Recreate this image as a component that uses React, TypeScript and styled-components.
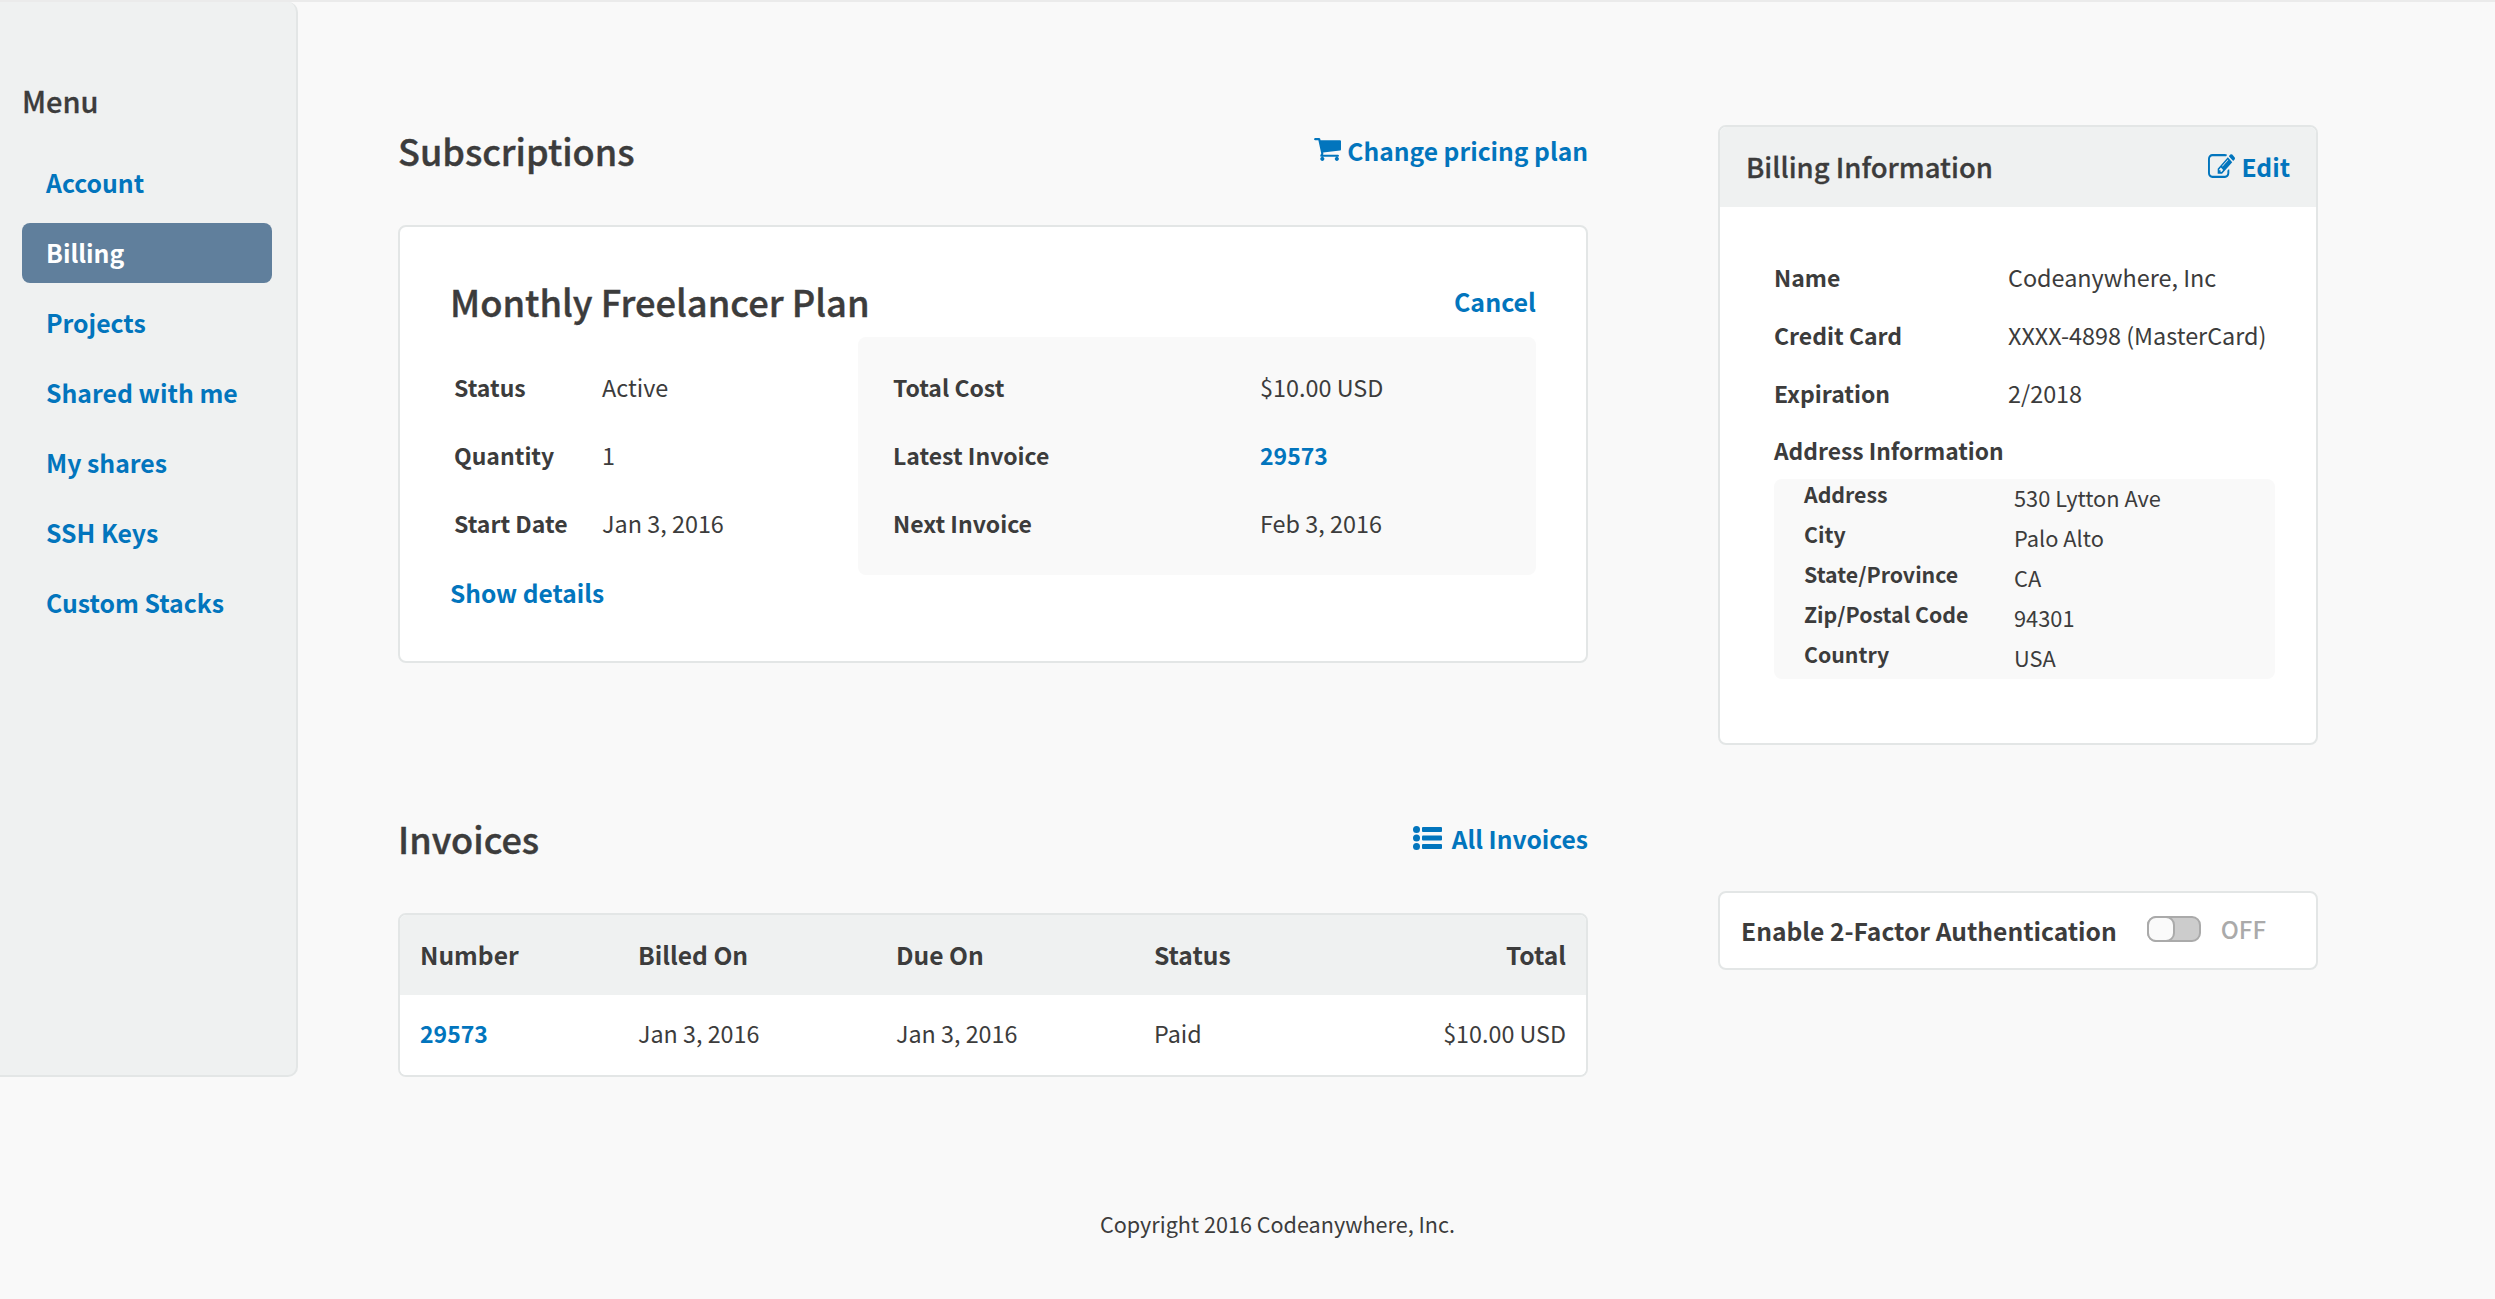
import React from "react";
import styled, { createGlobalStyle } from "styled-components";

const GlobalStyle = createGlobalStyle`
  html, body {
    margin: 0;
    padding: 0;
    background: #f9f9f9;
    overflow: hidden;
  }
  body {
    font-family: "Noto Sans CJK SC", "Noto Sans", sans-serif;
    color: #3c3c3c;
  }
`;

const LINK = "#0275bd";
const LINE = "#e3e6e6";
const SHADE = "#eff1f1";

const Page = styled.div`
  width: 2495px;
  height: 1299px;
  box-sizing: border-box;
  border-top: 2px solid #ebebeb;
`;
const Top = styled.div`
  display: flex;
  height: 1075px;
`;
const Sidebar = styled.aside`
  width: 298px;
  height: 1075px;
  box-sizing: border-box;
  flex: none;
  padding: 0 24px 0 22px;
  background: ${SHADE};
  border-right: 2px solid ${LINE};
  border-bottom: 2px solid ${LINE};
  border-radius: 0 10px 10px 0;
`;
const MenuTitle = styled.h3`
  margin: 78px 0 0;
  font-size: 29px;
  line-height: 40px;
  font-weight: 500;
  -webkit-text-stroke: 0.3px currentColor;
`;
const NavList = styled.nav`
  display: flex;
  flex-direction: column;
  gap: 10px;
  margin-top: 33px;
`;
const NavItem = styled.a<{ $active?: boolean }>`
  display: block;
  height: 60px;
  line-height: 58px;
  padding-left: 24px;
  font-size: 24.8px;
  font-weight: 700;
  border-radius: 8px;
  color: ${(p) => (p.$active ? "#fff" : LINK)};
  background: ${(p) => (p.$active ? "#607f9c" : "transparent")};
`;
const LeftColumn = styled.main`
  width: 1190px;
  margin-left: 100px;
  flex: none;
`;
const RightColumn = styled.section`
  width: 600px;
  margin-left: 130px;
  padding-top: 123px;
  flex: none;
`;
const SectionHead = styled.div<{ $top: number }>`
  display: flex;
  justify-content: space-between;
  align-items: center;
  box-sizing: border-box;
  height: 48px;
  padding-bottom: 3px;
  margin-top: ${(p) => p.$top}px;
  margin-bottom: 50px;
`;
const SectionTitle = styled.h2`
  margin: 0;
  font-size: 36.1px;
  font-weight: 500;
  -webkit-text-stroke: 0.4px currentColor;
`;
const ActionLink = styled.a<{ $gap?: number }>`
  display: flex;
  align-items: center;
  gap: ${(p) => p.$gap ?? 6}px;
  font-size: 24.6px;
  font-weight: 700;
  color: ${LINK};
  svg {
    display: block;
    fill: currentColor;
  }
`;
const Card = styled.div`
  background: #fff;
  border: 2px solid ${LINE};
  border-radius: 8px;
  box-sizing: border-box;
`;
const PlanCard = styled(Card)`
  height: 438px;
  padding: 44px 50px 0 50px;
`;
const PlanHead = styled.div`
  display: flex;
  justify-content: space-between;
  align-items: center;
  height: 60px;
`;
const PlanTitle = styled.h3`
  margin: 0;
  font-size: 36.3px;
  font-weight: 500;
  -webkit-text-stroke: 0.4px currentColor;
`;
const PlanBody = styled.div`
  display: flex;
  height: 238px;
  margin-top: 6px;
`;
const PlanLeft = styled.div`
  width: 408px;
  flex: none;
  padding-top: 17px;
  padding-left: 4px;
  box-sizing: border-box;
`;
const PlanRight = styled.div`
  flex: 1;
  padding: 17px 0 0 35px;
  background: #f9f9f9;
  border-radius: 8px;
`;
const InfoRow = styled.div<{ $label: number; $height?: number }>`
  display: grid;
  grid-template-columns: ${(p) => p.$label}px 1fr;
  align-items: center;
  box-sizing: border-box;
  height: ${(p) => p.$height ?? 68}px;
  padding-bottom: 3px;
  font-size: 23.4px;
  white-space: nowrap;
`;
const Label = styled.span`
  font-size: 23px;
  font-weight: 700;
`;
const ValueLink = styled.a`
  font-size: 23px;
  font-weight: 700;
  color: ${LINK};
`;
const CardLink = styled.a`
  font-size: 25px;
  font-weight: 700;
  color: ${LINK};
`;
const ShowDetails = styled(CardLink)`
  display: block;
  margin-top: -2px;
  line-height: 40px;
  font-size: 24.5px;
`;
const TableCard = styled(Card)`
  height: 164px;
  overflow: hidden;
`;
const TableRow = styled.div<{ $head?: boolean }>`
  display: grid;
  grid-template-columns: 218px 258px 258px 1fr auto;
  align-items: center;
  box-sizing: border-box;
  height: 80px;
  padding: 0 20px ${(p) => (p.$head ? 3 : 5)}px;
  font-size: ${(p) => (p.$head ? 24.6 : 23.3)}px;
  font-weight: ${(p) => (p.$head ? 700 : 400)};
  background: ${(p) => (p.$head ? SHADE : "#fff")};
`;
const BillingCard = styled(Card)`
  height: 620px;
  overflow: hidden;
`;
const BillingHead = styled.div`
  display: flex;
  justify-content: space-between;
  align-items: center;
  box-sizing: border-box;
  height: 80px;
  padding: 0 26px 3px;
  background: ${SHADE};
`;
const BillingTitle = styled.h3`
  margin: 0;
  font-size: 27.5px;
  font-weight: 500;
  -webkit-text-stroke: 0.3px currentColor;
`;
const BillingBody = styled.div`
  padding: 42px 40px 0 54px;
`;
const AddressTitle = styled.div`
  height: 58px;
  line-height: 55px;
  font-size: 22.8px;
  font-weight: 700;
`;
const AddressPanel = styled.div`
  width: 501px;
  height: 200px;
  margin-top: -2px;
  box-sizing: border-box;
  padding-left: 30px;
  background: #f9f9f9;
  border-radius: 8px;
`;
const AddressRow = styled.div`
  display: grid;
  grid-template-columns: 210px 1fr;
  height: 40px;
`;
const AddressLabel = styled.span`
  font-size: 21.3px;
  line-height: 30px;
  font-weight: 700;
`;
const AddressValue = styled.span`
  font-size: 21.8px;
  line-height: 38px;
`;
const ToggleCard = styled(Card)`
  display: flex;
  align-items: center;
  height: 79px;
  margin-top: 146px;
  padding-left: 21px;
`;
const ToggleLabel = styled.span`
  margin-top: -2px;
  font-size: 24.6px;
  font-weight: 700;
`;
const Toggle = styled.span`
  position: relative;
  width: 54px;
  height: 26px;
  margin: -4px 0 0 30px;
  box-sizing: border-box;
  background: #ccc;
  border: 2px solid #aaa;
  border-radius: 9px;
`;
const Knob = styled.span`
  position: absolute;
  left: -2px;
  top: -2px;
  width: 28px;
  height: 26px;
  box-sizing: border-box;
  background: #fafafa;
  border: 2px solid #aaa;
  border-radius: 9px;
`;
const ToggleState = styled.span`
  margin: -4px 0 0 20px;
  font-size: 24px;
  font-weight: 500;
  color: #aaa;
`;
const Footer = styled.footer`
  margin-top: 132px;
  padding-left: 60px;
  text-align: center;
  font-size: 21.6px;
  line-height: 30px;
`;

const CartIcon = () => (
  <svg width="28" height="23" viewBox="0 256 1728 1408">
    <path d="M704 1536q0 52-38 90t-90 38-90-38-38-90 38-90 90-38 90 38 38 90zm896 0q0 52-38 90t-90 38-90-38-38-90 38-90 90-38 90 38 38 90zm128-1088v512q0 24-16.500 42.500t-40.500 21.500l-1044 122q13 60 13 70 0 16-24 64h920q26 0 45 19t19 45-19 45-45 19h-1024q-26 0-45-19t-19-45q0-11 8-31.500t16-36 21.500-40 15.500-29.500l-177-823h-204q-26 0-45-19t-19-45 19-45 45-19h256q16 0 28.500 6.500t19.500 15.500 13 24.500 8 26 5.500 29.500 4.500 26h1201q26 0 45 19t19 45z" />
  </svg>
);

const ListIcon = () => (
  <svg width="29" height="24" viewBox="0 0 29 24">
    <circle cx="3.5" cy="3.5" r="3.5" />
    <circle cx="3.5" cy="12" r="3.5" />
    <circle cx="3.5" cy="20.5" r="3.5" />
    <rect x="9" y="1" width="20" height="5" rx="1" />
    <rect x="9" y="9.500" width="20" height="5" rx="1" />
    <rect x="9" y="18" width="20" height="5" rx="1" />
  </svg>
);

const EditIcon = () => (
  <svg width="28" height="24" viewBox="0 128 1850 1408" preserveAspectRatio="none">
    <path d="M888 1184l116-116-152-152-116 116v56h96v96h56zm440-720q-16-16-33 1l-350 350q-17 17-1 33t33-1l350-350q17-17 1-33zm80 594v190q0 119-84.500 203.500t-203.500 84.500h-832q-119 0-203.500-84.500t-84.500-203.500v-832q0-119 84.500-203.500t203.500-84.500h832q63 0 117 25 15 7 18 23 3 17-9 29l-49 49q-14 14-32 8-23-6-45-6h-832q-66 0-113 47t-47 113v832q0 66 47 113t113 47h832q66 0 113-47t47-113v-126q0-13 9-22l64-64q15-15 35-7t20 29zm-96-738l288 288-672 672h-288v-288zm444 132l-92 92-288-288 92-92q28-28 68-28t68 28l152 152q28 28 28 68t-28 68z" />
  </svg>
);

const navItems = ["Account", "Billing", "Projects", "Shared with me", "My shares", "SSH Keys", "Custom Stacks"];
const address = [
  ["Address", "530 Lytton Ave"],
  ["City", "Palo Alto"],
  ["State/Province", "CA"],
  ["Zip/Postal Code", "94301"],
  ["Country", "USA"],
];

const App = () => {
  return (
    <Page>
      <GlobalStyle />
      <Top>
        <Sidebar>
          <MenuTitle>Menu</MenuTitle>
          <NavList>
            {navItems.map((item) => (
              <NavItem key={item} $active={item === "Billing"}>
                {item}
              </NavItem>
            ))}
          </NavList>
        </Sidebar>
        <LeftColumn>
          <SectionHead $top={125}>
            <SectionTitle>Subscriptions</SectionTitle>
            <ActionLink>
              <CartIcon />
              Change pricing plan
            </ActionLink>
          </SectionHead>
          <PlanCard>
            <PlanHead>
              <PlanTitle>Monthly Freelancer Plan</PlanTitle>
              <CardLink>Cancel</CardLink>
            </PlanHead>
            <PlanBody>
              <PlanLeft>
                <InfoRow $label={148}>
                  <Label>Status</Label>
                  <span>Active</span>
                </InfoRow>
                <InfoRow $label={148}>
                  <Label>Quantity</Label>
                  <span>1</span>
                </InfoRow>
                <InfoRow $label={148}>
                  <Label>Start Date</Label>
                  <span>Jan 3, 2016</span>
                </InfoRow>
              </PlanLeft>
              <PlanRight>
                <InfoRow $label={367}>
                  <Label>Total Cost</Label>
                  <span>$10.00 USD</span>
                </InfoRow>
                <InfoRow $label={367}>
                  <Label>Latest Invoice</Label>
                  <ValueLink>29573</ValueLink>
                </InfoRow>
                <InfoRow $label={367}>
                  <Label>Next Invoice</Label>
                  <span>Feb 3, 2016</span>
                </InfoRow>
              </PlanRight>
            </PlanBody>
            <ShowDetails>Show details</ShowDetails>
          </PlanCard>
          <SectionHead $top={152}>
            <SectionTitle>Invoices</SectionTitle>
            <ActionLink $gap={10}>
              <ListIcon />
              All Invoices
            </ActionLink>
          </SectionHead>
          <TableCard>
            <TableRow $head>
              <span>Number</span>
              <span>Billed On</span>
              <span>Due On</span>
              <span>Status</span>
              <span>Total</span>
            </TableRow>
            <TableRow>
              <ValueLink>29573</ValueLink>
              <span>Jan 3, 2016</span>
              <span>Jan 3, 2016</span>
              <span>Paid</span>
              <span>$10.00 USD</span>
            </TableRow>
          </TableCard>
        </LeftColumn>
        <RightColumn>
          <BillingCard>
            <BillingHead>
              <BillingTitle>Billing Information</BillingTitle>
              <ActionLink>
                <EditIcon />
                Edit
              </ActionLink>
            </BillingHead>
            <BillingBody>
              <InfoRow $label={234} $height={58}>
                <Label>Name</Label>
                <span>Codeanywhere, Inc</span>
              </InfoRow>
              <InfoRow $label={234} $height={58}>
                <Label>Credit Card</Label>
                <span>XXXX-4898 (MasterCard)</span>
              </InfoRow>
              <InfoRow $label={234} $height={58}>
                <Label>Expiration</Label>
                <span>2/2018</span>
              </InfoRow>
              <AddressTitle>Address Information</AddressTitle>
              <AddressPanel>
                {address.map(([label, value]) => (
                  <AddressRow key={label}>
                    <AddressLabel>{label}</AddressLabel>
                    <AddressValue>{value}</AddressValue>
                  </AddressRow>
                ))}
              </AddressPanel>
            </BillingBody>
          </BillingCard>
          <ToggleCard>
            <ToggleLabel>Enable 2-Factor Authentication</ToggleLabel>
            <Toggle>
              <Knob />
            </Toggle>
            <ToggleState>OFF</ToggleState>
          </ToggleCard>
        </RightColumn>
      </Top>
      <Footer>Copyright 2016 Codeanywhere, Inc.</Footer>
    </Page>
  );
};

export default App;
